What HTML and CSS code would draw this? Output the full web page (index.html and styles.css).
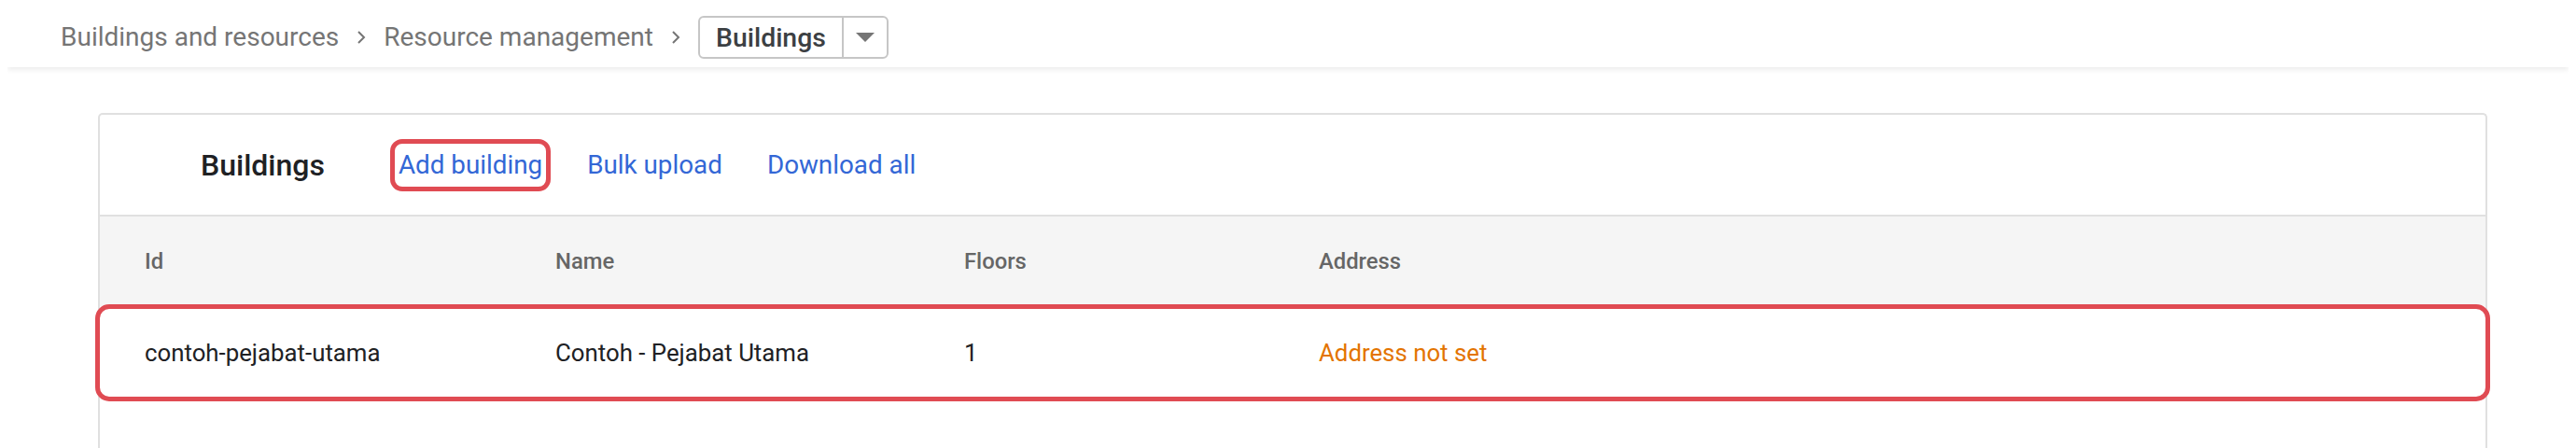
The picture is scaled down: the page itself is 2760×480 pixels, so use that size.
FILE: index.html
```html
<!DOCTYPE html>
<html lang="en">
<head>
<meta charset="utf-8">
<title>Buildings</title>
<link rel="stylesheet" href="styles.css">
</head>
<body>
<header class="topbar">
  <nav class="crumbs">
    <span class="crumb">Buildings and resources</span>
    <svg class="chev" width="12" height="16" viewBox="0 0 12 16"><polyline points="3,2 9,8 3,14" fill="none" stroke="#757575" stroke-width="2"/></svg>
    <span class="crumb">Resource management</span>
    <svg class="chev" width="12" height="16" viewBox="0 0 12 16"><polyline points="3,2 9,8 3,14" fill="none" stroke="#757575" stroke-width="2"/></svg>
    <div class="picker">
      <span class="picker-label">Buildings</span>
      <span class="picker-btn"><svg width="20" height="10" viewBox="0 0 20 10"><polygon points="0,0 20,0 10,10" fill="#757575"/></svg></span>
    </div>
  </nav>
</header>

<main class="card">
  <div class="toolbar">
    <h1 class="title">Buildings</h1>
    <div class="actions">
      <a class="action highlighted">Add building</a>
      <a class="action">Bulk upload</a>
      <a class="action">Download all</a>
    </div>
  </div>
  <div class="thead">
    <div class="th">Id</div>
    <div class="th">Name</div>
    <div class="th">Floors</div>
    <div class="th">Address</div>
  </div>
  <div class="trow highlighted-row">
    <div class="td">contoh-pejabat-utama</div>
    <div class="td">Contoh - Pejabat Utama</div>
    <div class="td">1</div>
    <div class="td warn">Address not set</div>
  </div>
  <div class="filler"></div>
</main>
</body>
</html>
```

FILE: styles.css
```css
* { box-sizing: border-box; }

body {
  margin: 8px;
  background: #ffffff;
  font-family: Roboto, "Noto Sans", Arial, sans-serif;
  color: #202124;
}

.topbar {
  height: 64px;
  display: flex;
  align-items: center;
  padding-left: 57px;
  background: #ffffff;
  box-shadow: 0 3px 5px rgba(0, 0, 0, 0.07);
}

.crumbs {
  display: flex;
  align-items: center;
  gap: 18px;
}

.crumb {
  font-size: 28px;
  color: #757575;
  line-height: 1;
}

.chev { display: block; }

.picker {
  display: flex;
  align-items: stretch;
  height: 46px;
  border: 2px solid #c6c6c6;
  border-radius: 6px;
}

.picker-label {
  display: flex;
  align-items: center;
  padding: 0 17px 0 17px;
  font-size: 28.4px;
  font-weight: 500;
  color: #3c4043;
  border-right: 2px solid #c6c6c6;
}

.picker-btn {
  width: 46px;
  display: flex;
  align-items: center;
  justify-content: center;
}

.picker-btn svg { display: block; }

.card {
  margin: 49px 87px 0 97px;
  border: 2px solid #e0e0e0;
  border-bottom: none;
  border-radius: 5px 5px 0 0;
  background: #ffffff;
}

.toolbar {
  height: 109px;
  display: flex;
  align-items: center;
  padding-left: 108px;
  border-bottom: 2px solid #e0e0e0;
}

.title {
  margin: 0;
  font-size: 32px;
  font-weight: 500;
  color: #202124;
  line-height: 1;
}

.actions {
  display: flex;
  align-items: center;
  gap: 48px;
  margin-left: 79px;
}

.action {
  font-size: 27.8px;
  color: #3367d6;
  line-height: 36px;
  cursor: pointer;
}

.highlighted { position: relative; }

.highlighted::after {
  content: "";
  position: absolute;
  top: -10px;
  bottom: -10px;
  left: -9px;
  right: -9px;
  border: 5px solid #e04b53;
  border-radius: 13px;
}

.thead,
.trow {
  display: grid;
  grid-template-columns: 440px 438px 380px 1fr;
  align-items: center;
  padding-left: 48px;
}

.thead {
  height: 96px;
  background: #f5f5f5;
}

.th {
  font-size: 23.8px;
  font-weight: 500;
  color: #666666;
}

.trow { height: 100px; }

.highlighted-row { position: relative; }

.highlighted-row::after {
  content: "";
  position: absolute;
  top: -2px;
  bottom: -2px;
  left: -5px;
  right: -5px;
  border: 5px solid #e04b53;
  border-radius: 15px;
}

.td {
  font-size: 25.8px;
  color: #202124;
}

.td.warn { color: #e37400; }

.filler { height: 120px; }
```
